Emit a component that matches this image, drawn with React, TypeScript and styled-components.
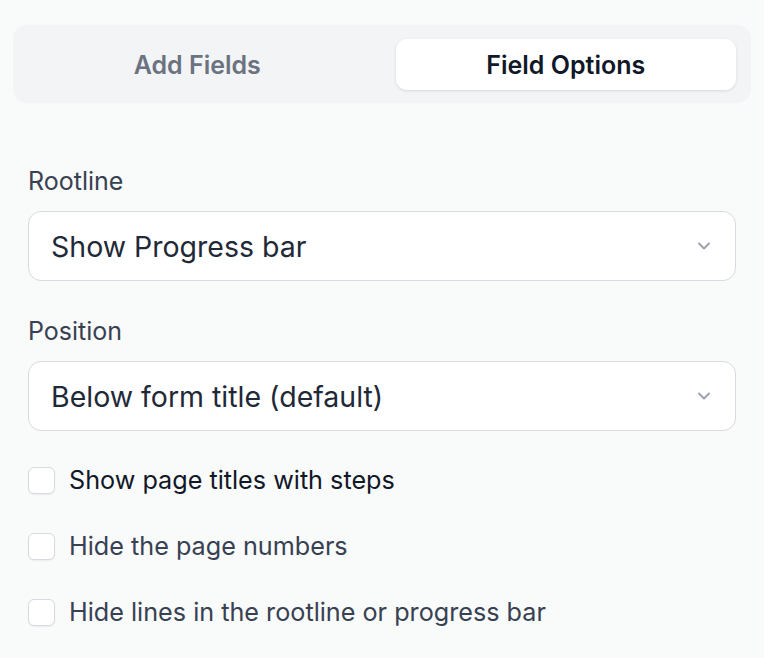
import styled, { createGlobalStyle } from 'styled-components'

const GlobalStyle = createGlobalStyle`
  html, body {
    margin: 0;
    padding: 0;
    background: #f9fafa;
    font-family: Inter, "Noto Sans", sans-serif;
    -webkit-font-smoothing: antialiased;
  }
`

const Panel = styled.div`
  width: 764px;
  min-height: 658px;
  box-sizing: border-box;
  padding: 25px 13px 0;
`

const Tabs = styled.div`
  display: grid;
  grid-template-columns: 1fr 1fr;
  gap: 28px;
  padding: 14px 15px 13px 14px;
  background: #f3f4f6;
  border-radius: 14px;
`

const Tab = styled.button<{ $active?: boolean }>`
  height: 51px;
  border: none;
  border-radius: 11px;
  font-family: inherit;
  font-size: 25px;
  font-weight: 600;
  cursor: pointer;
  color: ${p => (p.$active ? '#111827' : '#6b7280')};
  background: ${p => (p.$active ? '#ffffff' : 'transparent')};
  box-shadow: ${p => (p.$active ? '0 1px 3px rgba(17, 24, 39, 0.12)' : 'none')};
`

const Form = styled.div`
  padding: 63px 15px 0;
  display: flex;
  flex-direction: column;
`

const Field = styled.div`
  display: flex;
  flex-direction: column;
  margin-bottom: 35px;
`

const Label = styled.label`
  font-size: 25px;
  color: #374151;
  line-height: 30px;
  margin-bottom: 15px;
`

const Select = styled.div`
  height: 70px;
  box-sizing: border-box;
  display: flex;
  align-items: center;
  justify-content: space-between;
  padding: 0 24px 0 22px;
  background: #ffffff;
  border: 1px solid #d8dae0;
  border-radius: 13px;
  font-size: 28.5px;
  color: #1f2937;
`

const Chevron = () => (
  <svg width="14" height="8" viewBox="0 0 14 8" fill="none">
    <path d="M2 1.5l5 5 5-5" stroke="#9ca3af" strokeWidth="2" strokeLinecap="round" strokeLinejoin="round" />
  </svg>
)

const Checks = styled.div`
  display: flex;
  flex-direction: column;
  gap: 38px;
`

const CheckRow = styled.label<{ $strong?: boolean }>`
  display: flex;
  align-items: center;
  gap: 14px;
  font-size: 25.2px;
  line-height: 28px;
  color: ${p => (p.$strong ? '#111827' : '#374151')};
`

const Box = styled.span`
  width: 27px;
  height: 27px;
  box-sizing: border-box;
  border: 1px solid #d8dae0;
  border-radius: 6px;
  background: #ffffff;
  box-shadow: 0 1px 2px rgba(17, 24, 39, 0.06);
`

export default function App() {
  return (
    <>
      <GlobalStyle />
      <Panel>
        <Tabs>
          <Tab>Add Fields</Tab>
          <Tab $active>Field Options</Tab>
        </Tabs>
        <Form>
          <Field>
            <Label>Rootline</Label>
            <Select>
              <span>Show Progress bar</span>
              <Chevron />
            </Select>
          </Field>
          <Field>
            <Label>Position</Label>
            <Select>
              <span>Below form title (default)</span>
              <Chevron />
            </Select>
          </Field>
          <Checks>
            <CheckRow $strong>
              <Box />
              Show page titles with steps
            </CheckRow>
            <CheckRow>
              <Box />
              Hide the page numbers
            </CheckRow>
            <CheckRow>
              <Box />
              Hide lines in the rootline or progress bar
            </CheckRow>
          </Checks>
        </Form>
      </Panel>
    </>
  )
}
